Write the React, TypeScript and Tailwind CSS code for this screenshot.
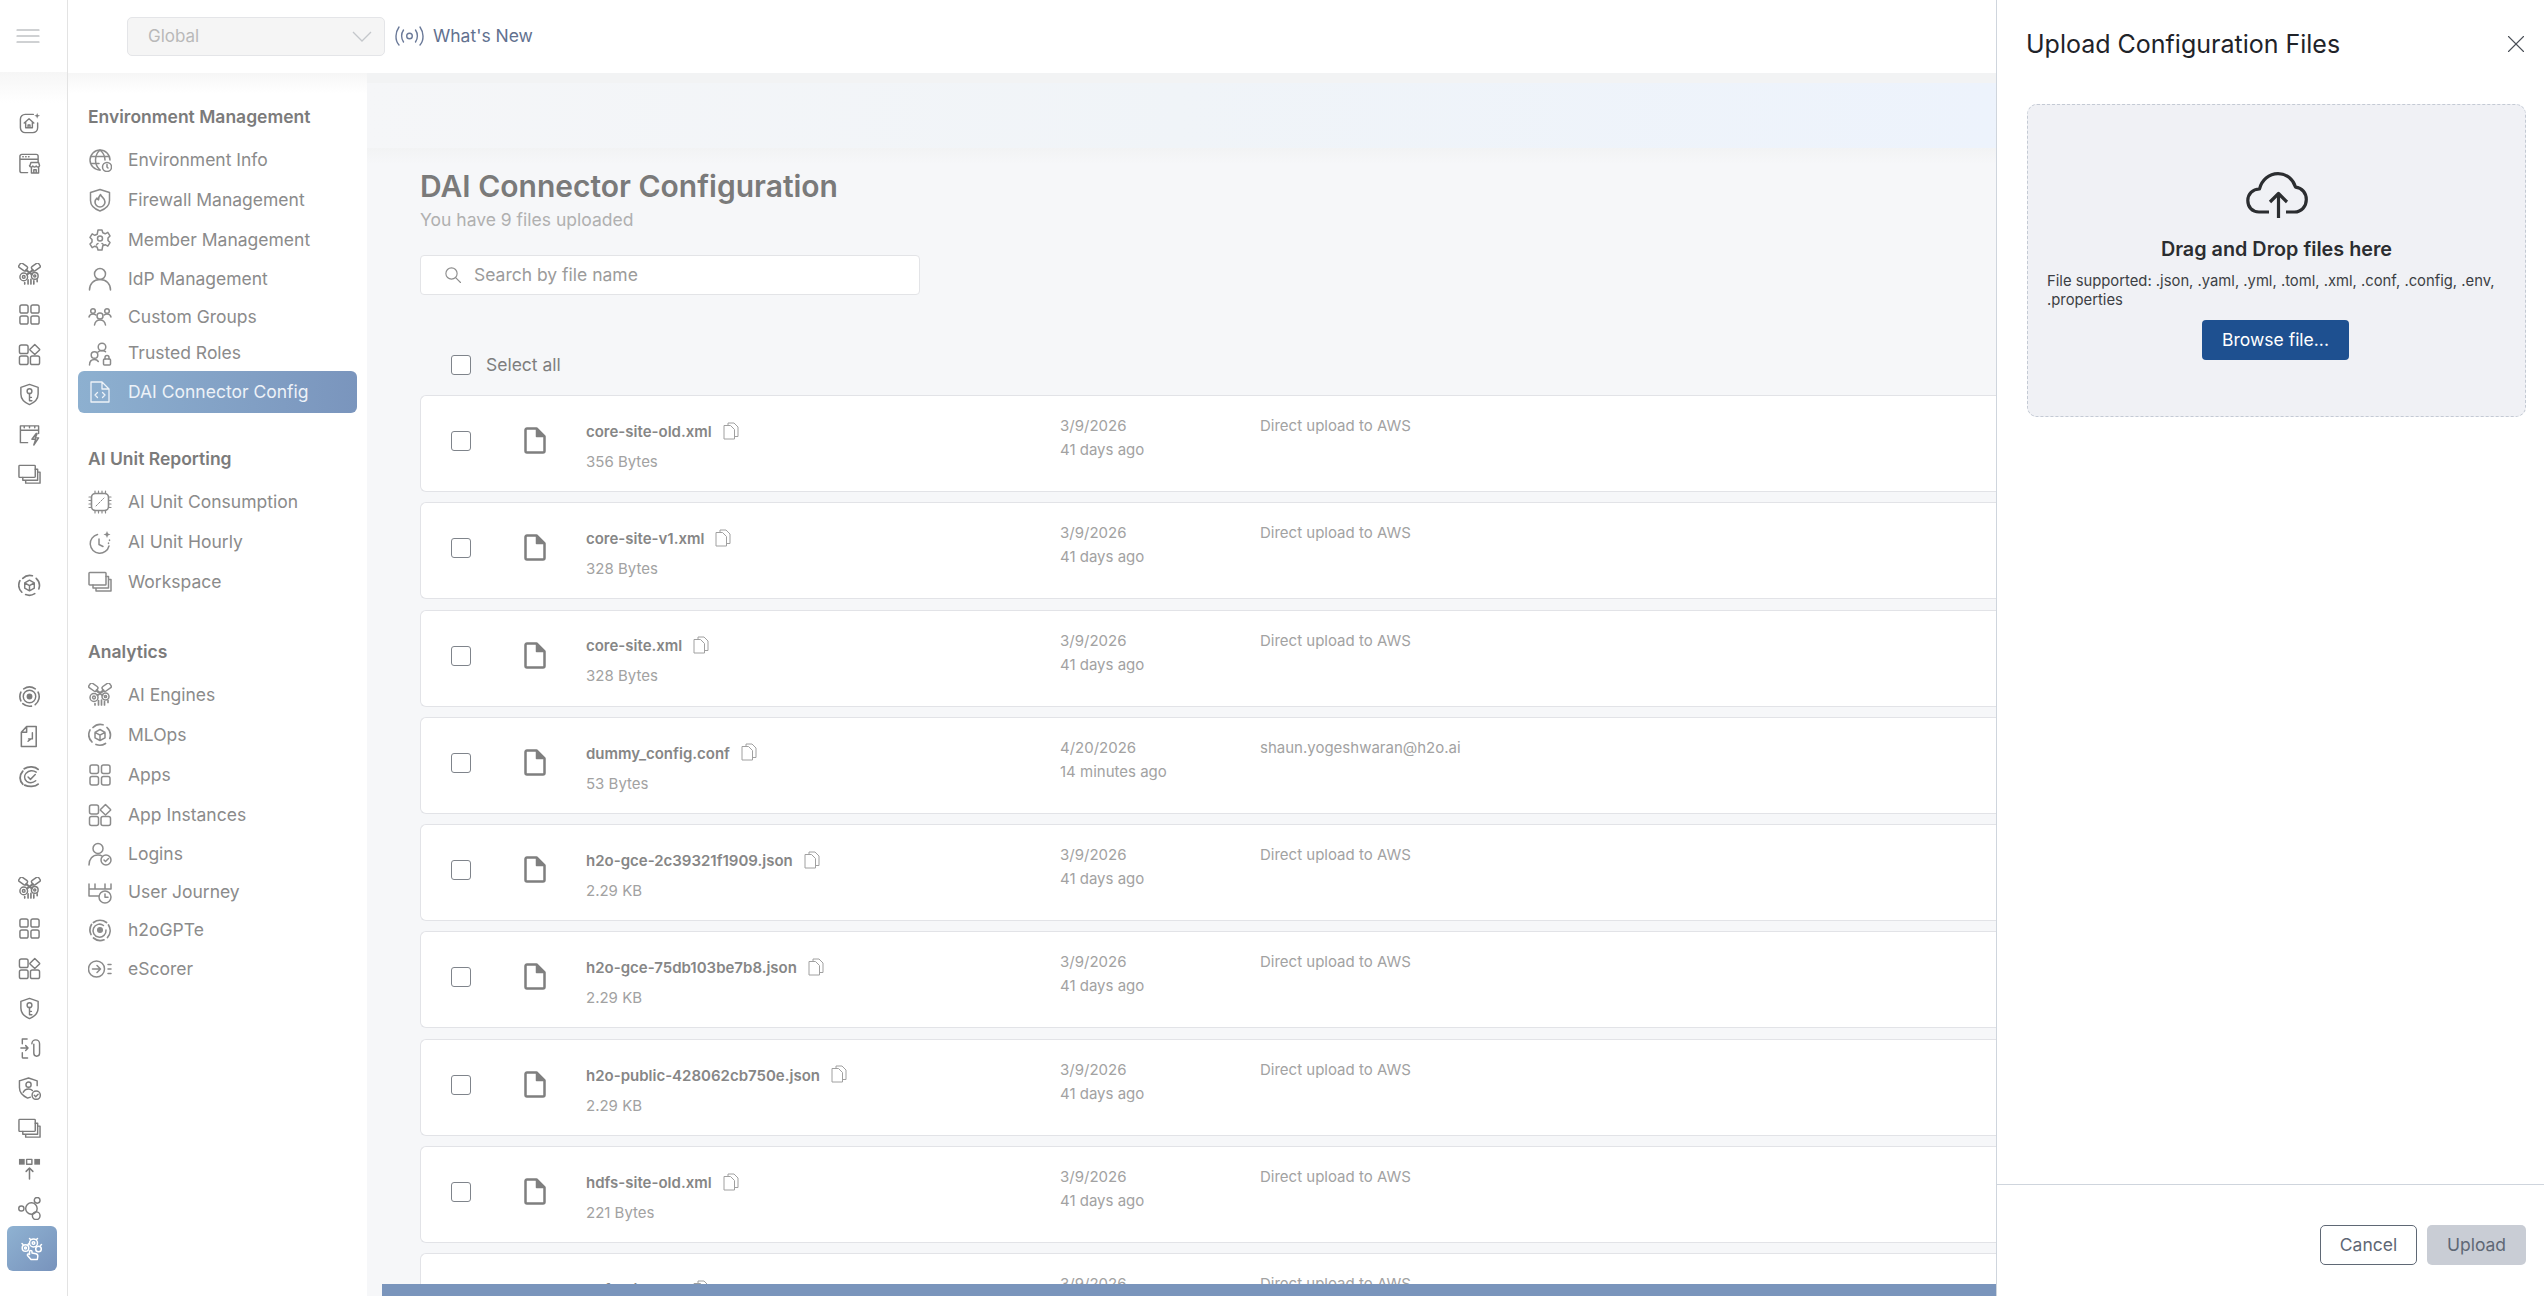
import { ReactNode } from "react";
import { X } from "lucide-react";

type IconProps = { className?: string };

// shared wrapper for the outline icons, they all sit on a 24 grid
function Svg({ className, children }: IconProps & { children: ReactNode }) {
  return (
    <svg
      viewBox="0 0 24 24"
      fill="none"
      stroke="currentColor"
      strokeWidth={1.5}
      strokeLinecap="round"
      strokeLinejoin="round"
      className={className}
    >
      {children}
    </svg>
  );
}

const HomeSpark = (p: IconProps) => (
  <Svg {...p}>
    <path d="M16 2.500H7.500a5 5 0 0 0-5 5v9a5 5 0 0 0 5 5h8a5 5 0 0 0 5-5v-5" />
    <path d="M6.500 11.500 11.500 7l5 4.500M8 10.500v6h7v-6M10.500 16.500v-3h2v3" />
    <path d="M20 1l.8 2.200L23 4l-2.200.8L20 7l-.8-2.200L17 4l2.200-.8z" fill="currentColor" stroke="none" />
  </Svg>
);
const BrowserStore = (p: IconProps) => (
  <Svg {...p}>
    <path d="M10 21.500H4a2 2 0 0 1-2-2v-15a2 2 0 0 1 2-2h15a2 2 0 0 1 2 2v6M2 7.500h19" />
    <path d="M5 5h.5M8 5h.5M11 5h.5" />
    <path d="M12.500 14l1-3h8l1 3c0 2-3 2-3.500.5-.5 1.500-3 1.500-3.500 0-.5 1.500-3.500 1.500-3.500-.5zM14 16v6h7.500v-6M16.500 22v-3.500H19V22" />
  </Svg>
);
const Engines = (p: IconProps) => (
  <Svg {...p}>
    <rect x="1" y="1.500" width="9" height="5.500" rx="1.800" transform="rotate(35 5.500 4)" />
    <rect x="14" y="1.500" width="9" height="5.500" rx="1.800" transform="rotate(-35 18.500 4)" />
    <path d="M8.500 7.500l6 4.500M15.500 7.500l-6 4.500" strokeWidth={2.200} />
    <circle cx="6" cy="14.500" r="4" />
    <circle cx="6" cy="14.500" r="1.400" />
    <circle cx="17.500" cy="13.500" r="3.500" />
    <circle cx="17.500" cy="13.500" r="1.100" />
    <path d="M7 20.500v1.500M10.500 17.500v4.500M13.500 17v5M16.500 18.500v3.500M20 17.500v2" strokeWidth={1.700} />
  </Svg>
);
const Grid = (p: IconProps) => (
  <Svg {...p}>
    <rect x="2" y="2" width="8.500" height="8.500" rx="2" />
    <rect x="13.500" y="2" width="8.500" height="8.500" rx="2" />
    <rect x="2" y="13.500" width="8.500" height="8.500" rx="2" />
    <rect x="13.500" y="13.500" width="8.500" height="8.500" rx="2" />
  </Svg>
);
const AppsDiamond = (p: IconProps) => (
  <Svg {...p}>
    <rect x="1.500" y="2" width="9" height="9" rx="2" />
    <path d="M17.500 1.500l5 5a.6.6 0 0 1 0 .8l-5 4.700-5-4.700a.6.6 0 0 1 0-.8z" />
    <rect x="1.500" y="13.500" width="9" height="9" rx="2" />
    <rect x="13" y="13.500" width="9.500" height="9" rx="2" />
  </Svg>
);
const ShieldKey = (p: IconProps) => (
  <Svg {...p}>
    <path d="M12 1.500 21 4.500v7c0 5.500-4 9-9 11-5-2-9-5.500-9-11v-7z" />
    <circle cx="12" cy="8.500" r="2.500" />
    <path d="M12 11v7.500h2.500M12 15h2" />
  </Svg>
);
const PanelBolt = (p: IconProps) => (
  <Svg {...p}>
    <path d="M10 20.500H2.500V3h19v8M2.500 7.500h19M6.500 3v2M12 3v2M17.500 3v2" />
    <path d="M19 11l-4.500 6h4l-2 6 5-7.500h-3.500l2-4.500z" />
  </Svg>
);
const Stacked = (p: IconProps) => (
  <Svg {...p}>
    <rect x="1" y="2.500" width="17" height="12.500" rx=".8" />
    <path d="M18 6.500h2.500V18H5v-3M20.500 9.500H23V21H8v-3" />
  </Svg>
);
const MLOps = (p: IconProps) => (
  <Svg {...p}>
    <path d="M5 4.500A10.500 10.500 0 0 1 15 1.800M19 4.500a10.500 10.500 0 0 1 2.800 11M17.500 20.500a10.500 10.500 0 0 1-9.500 1M4 19a10.500 10.500 0 0 1-2-12" strokeWidth={1.700} />
    <path d="M12 6.500 17 9.300v5.500l-5 2.700-5-2.700V9.300zM7 9.300l5 2.900 5-2.900M12 12.200v5.300" />
  </Svg>
);
const Target = (p: IconProps) => (
  <Svg {...p}>
    <path d="M6 4a10.500 10.500 0 0 1 12 0M21 7.500a10.500 10.500 0 0 1-3 13M14 22a10.500 10.500 0 0 1-9-2.500M3 16.500a10.500 10.500 0 0 1 0-9" strokeWidth={1.700} />
    <circle cx="12" cy="12" r="6.500" />
    <circle cx="12" cy="12" r="2.300" fill="currentColor" />
  </Svg>
);
const FileNote = (p: IconProps) => (
  <Svg {...p}>
    <path d="M9 1.500h10v21H3.500V7.500zM9 1.500v6H3.500" strokeWidth={1.600} />
    <path d="M15 8v6.500h-4M10.500 17l3-2.500" />
  </Svg>
);
const CircleCheck = (p: IconProps) => (
  <Svg {...p}>
    <path d="M21 4.500C18 1.500 11 .8 6.500 4M5 6.500c-4 4.500-3.500 10 0 13.500M7 21c4 2 11 2 14-1" strokeWidth={1.900} />
    <path d="M19 7.500a8 8 0 0 0-10.500 1c-2.500 3-2 6 .5 8.500 3 2 7 1.500 9.500-.5" />
    <path d="M10.500 12.500l2.500 2.500 5-5" />
  </Svg>
);
const LinkArrow = (p: IconProps) => (
  <Svg {...p}>
    <path d="M9.500 2h-5v5M3 11.500h7.500M8 9l2.500 2.500L8 14M4.500 16.500V21a1 1 0 0 0 1 1H10" />
    <path d="M14.500 7a4 4 0 0 1 8 0v10a3 3 0 0 1-6 0V7.500" />
  </Svg>
);
const ShieldUser = (p: IconProps) => (
  <Svg {...p}>
    <path d="M11 1 20 4v5M1.500 4 11 1M1.500 4v7c0 5.500 4 9 8.500 11l3-1" />
    <circle cx="11" cy="8" r="2.700" />
    <path d="M5.500 16c1-2.500 3-3.500 5.500-3.500 1.500 0 3 .5 4 1.500" />
    <circle cx="19" cy="19" r="4.300" />
    <path d="M17 19l1.500 1.500 2.500-2.500" />
  </Svg>
);
const SquaresUp = (p: IconProps) => (
  <Svg {...p}>
    <rect x="1" y="2" width="6" height="6" fill="currentColor" stroke="none" />
    <rect x="9" y="2.500" width="5.500" height="5" />
    <rect x="17" y="2" width="6" height="6" fill="currentColor" stroke="none" />
    <path d="M12 23V11.500M8.500 15l3.500-3.500 3.500 3.500" strokeWidth={1.600} />
  </Svg>
);
const Bubbles = (p: IconProps) => (
  <Svg {...p}>
    <circle cx="3.500" cy="12" r="2.700" />
    <circle cx="20" cy="3.500" r="3" />
    <circle cx="14" cy="12" r="6" />
    <circle cx="19" cy="19.500" r="4" />
  </Svg>
);
const GearHand = (p: IconProps) => (
  <Svg {...p}>
    <circle cx="13.500" cy="6" r="4" />
    <circle cx="13.500" cy="6" r="1.300" />
    <circle cx="5.500" cy="11" r="3.300" />
    <circle cx="5.500" cy="11" r="1" />
    <circle cx="18.500" cy="12" r="2.800" />
    <path d="M10.500 2.500l-1-1M16.500 2.500l1-1M3 7.500l-1-1M8 7.500l1-1M20.500 8.500l1-1" />
    <path d="M9.500 14.500c0-1.500 2.500-1.500 2.500 0V16l4 .8c1.500.4 2 1.200 1.800 2.700l-.5 3H11l-3.500-4c-.5-1.500 1-2 2-1z" />
  </Svg>
);
const GlobeClock = (p: IconProps) => (
  <Svg {...p}>
    <path d="M12 22A10 10 0 1 1 22 12M2.500 8.500h19M2.500 15.500H11" />
    <path d="M12 2c-6 5.500-6 14.500 0 20M12 2c3.500 3 5 7 5 10" />
    <circle cx="19" cy="19" r="4.500" fill="#fff" />
    <path d="M19 16.500V19l1 1" />
  </Svg>
);
const ShieldFlame = (p: IconProps) => (
  <Svg {...p}>
    <path d="M12 1.500 21.500 4.500v8c0 5-4 8.500-9.500 10.500-5.500-2-9.500-5.500-9.500-10.500v-8z" />
    <path d="M12.500 6.500c.5 2.500 4.500 3.500 4.500 7.500a5 5 0 0 1-10 0c0-2 1-3 2-4 .3 1 .8 1.500 1.500 1.800 0-2 .8-4 2-5.300z" strokeWidth={1.600} />
  </Svg>
);
const GearUser = (p: IconProps) => (
  <Svg {...p}>
    <path d="M10 2h4l.8 2.800 2.400 1 2.600-1.400 2.200 3.500-2 2.100v2.500l2 2.100-2.200 3.500-2.600-1.400-2.400 1L14 22h-4l-.8-2.800-2.400-1-2.600 1.400L2 16.100 4 14v-2.500L2 9.400l2.200-3.500 2.600 1.400 2.400-1z" />
    <circle cx="12" cy="10.500" r="2.500" />
    <path d="M8.500 17c.5-1 1-1.500 1.500-1.500M15.500 17c-.5-1-1-1.500-1.500-1.500" />
  </Svg>
);
const User = (p: IconProps) => (
  <Svg {...p}>
    <circle cx="12" cy="7" r="5.500" />
    <path d="M1.500 23c0-6 4-10.500 10.500-10.500S22.500 17 22.500 23" />
  </Svg>
);
const UsersThree = (p: IconProps) => (
  <Svg {...p}>
    <circle cx="5" cy="6" r="2.300" />
    <circle cx="19" cy="6" r="2.300" />
    <circle cx="12" cy="11" r="3" />
    <path d="M1 12c.5-2 2-3 4-3 1 0 2 .3 2.800 1M23 12c-.5-2-2-3-4-3-1 0-2 .3-2.800 1M6.500 20c.5-3 2.500-5 5.500-5s5 2 5.500 5" />
  </Svg>
);
const UsersLock = (p: IconProps) => (
  <Svg {...p}>
    <circle cx="14" cy="5" r="3.800" />
    <circle cx="6.500" cy="13" r="3.300" />
    <path d="M1.500 23c0-3.500 2-5.500 5-5.500 1.500 0 3 .7 3.800 2M10 10c1-1 2.500-1.500 4-1.500s2.500.5 3.500 1.200" />
    <rect x="15.500" y="17" width="7" height="6" rx="1" />
    <path d="M17 17v-1.500a2 2 0 0 1 4 0V17" />
  </Svg>
);
const FileCode = (p: IconProps) => (
  <Svg {...p}>
    <path d="M3 2h11l7 7v13H3zM14 2v7h7" strokeWidth={1.300} />
    <path d="M9.500 12.500 7 15l2.500 2.500M14.500 12.500 17 15l-2.500 2.500" strokeWidth={1.300} />
  </Svg>
);
const Chip = (p: IconProps) => (
  <Svg {...p}>
    <rect x="3.500" y="3.500" width="17" height="17" rx="4" strokeWidth={1.600} />
    <path d="M7 1v2M10.500 1v2M14 1v2M17.500 1v2M7 21v2M10.500 21v2M14 21v2M17.500 21v2M1 7h2M1 10.500h2M1 14h2M1 17.500h2M21 7h2M21 10.500h2M21 14h2M21 17.500h2" strokeWidth={1.200} />
    <path d="M8 16l8-8" strokeDasharray="2 1.500" strokeWidth={1} />
  </Svg>
);
const ClockSpark = (p: IconProps) => (
  <Svg {...p}>
    <path d="M9.500 4.500A9.500 9.500 0 1 0 21 16" />
    <path d="M11 9v5.500l4 2" />
    <path d="M19 1l1 2.500 2.500 1-2.500 1L19 8l-1-2.500-2.500-1 2.500-1z" fill="currentColor" stroke="none" />
    <path d="M21.500 10v.5M20.500 13v.5" />
  </Svg>
);
const UserCheck = (p: IconProps) => (
  <Svg {...p}>
    <circle cx="10" cy="6.500" r="5" />
    <path d="M1 23c0-6 3.500-10 9-10 1.500 0 3 .3 4 1" />
    <circle cx="18" cy="18" r="5" />
    <path d="M16 18l1.500 1.500 3-3" />
  </Svg>
);
const Journey = (p: IconProps) => (
  <Svg {...p}>
    <path d="M1 4v12h10M23 4v5M1 9h22M7 4v5M17 4v5" />
    <circle cx="17" cy="17" r="6" />
    <path d="M17 14v3.300h3" />
  </Svg>
);
const Rings = (p: IconProps) => (
  <Svg {...p}>
    <path d="M5.500 4.500a10.500 10.500 0 0 1 13 0M20.500 7a10.500 10.500 0 0 1-1 12.500M16 21.800A10.500 10.500 0 0 1 5.500 20M3 16.500a10.500 10.500 0 0 1 .5-10" strokeWidth={1.700} />
    <path d="M15.500 7.500a6.500 6.500 0 1 0 2.500 4.500" />
    <circle cx="12" cy="12" r="2.300" fill="currentColor" />
  </Svg>
);
const Scorer = (p: IconProps) => (
  <Svg {...p}>
    <circle cx="8.500" cy="12" r="8" />
    <path d="M4.500 12H12M9 8.500l3.500 3.500L9 15.500M20 7.500h3M20 12h3M20 16.500h3" />
  </Svg>
);
const Hamburger = (p: IconProps) => (
  <Svg {...p}>
    <path d="M1 6h22M1 12h22M1 18h22" strokeWidth={1.200} />
  </Svg>
);
const Broadcast = (p: IconProps) => (
  <svg viewBox="0 0 29 20" fill="none" stroke="currentColor" strokeWidth={1.400} strokeLinecap="round" className={p.className}>
    <circle cx="14.500" cy="10" r="2.800" />
    <path d="M8.500 4c-2.500 3.500-2.500 8.500 0 12M20.500 4c2.500 3.500 2.500 8.500 0 12M4 1C.5 6-.5 14 4 19M25 1c3.500 5 4.500 13 0 18" />
  </svg>
);
const DocFile = (p: IconProps) => (
  <svg viewBox="0 0 22 27" fill="none" stroke="currentColor" strokeWidth={2.500} strokeLinejoin="round" className={p.className}>
    <path d="M1.500 3A1.500 1.500 0 0 1 3 1.500h9.500l8 8V24a1.500 1.500 0 0 1-1.500 1.500H3A1.500 1.500 0 0 1 1.500 24z" />
    <path d="M12.500 1.500v8h8" fill="currentColor" strokeWidth={1.500} />
  </svg>
);
const CopyDoc = (p: IconProps) => (
  <svg viewBox="0 0 16 18" fill="none" stroke="currentColor" strokeWidth={1} strokeLinejoin="round" className={p.className}>
    <path d="M5 3.500V1h6l4 4v9.500h-3.500" />
    <path d="M1 3.500h6.500l4 4V17H1z" />
  </svg>
);
const Search = (p: IconProps) => (
  <Svg {...p}>
    <circle cx="10" cy="10" r="7.500" />
    <path d="M15.500 15.500 22 22" />
  </Svg>
);
const CloudUp = (p: IconProps) => (
  <svg viewBox="0 0 62 46" fill="none" stroke="currentColor" strokeWidth={3.200} strokeLinejoin="round" className={p.className}>
    <path d="M23 40H13C6 40 1.800 35 1.800 28.500 1.800 22 6.500 17 13.500 17c2-9 9.500-15.400 18.500-15.400 8.500 0 15 5.500 17.500 13.500 6.500.7 10.800 6 10.800 12.400C60.300 34.500 55.500 40 48.500 40H40" />
    <path d="M32.500 46V22M24 30l8.500-8.500L41 30" />
  </svg>
);

type NavItem = { label: string; icon: (p: IconProps) => ReactNode; h: string; active?: boolean };

const envItems: NavItem[] = [
  { label: "Environment Info", icon: GlobeClock, h: "h-[40px]" },
  { label: "Firewall Management", icon: ShieldFlame, h: "h-[40px]" },
  { label: "Member Management", icon: GearUser, h: "h-[40px]" },
  { label: "IdP Management", icon: User, h: "h-[38px]" },
  { label: "Custom Groups", icon: UsersThree, h: "h-[38px]" },
  { label: "Trusted Roles", icon: UsersLock, h: "h-[35px]" },
  { label: "DAI Connector Config", icon: FileCode, h: "h-[42px]", active: true },
];
const reportingItems: NavItem[] = [
  { label: "AI Unit Consumption", icon: Chip, h: "h-[40px]" },
  { label: "AI Unit Hourly", icon: ClockSpark, h: "h-[40px]" },
  { label: "Workspace", icon: Stacked, h: "h-[40px]" },
];
const analyticsItems: NavItem[] = [
  { label: "AI Engines", icon: Engines, h: "h-[40px]" },
  { label: "MLOps", icon: MLOps, h: "h-[40px]" },
  { label: "Apps", icon: Grid, h: "h-[40px]" },
  { label: "App Instances", icon: AppsDiamond, h: "h-[40px]" },
  { label: "Logins", icon: UserCheck, h: "h-[38px]" },
  { label: "User Journey", icon: Journey, h: "h-[38px]" },
  { label: "h2oGPTe", icon: Rings, h: "h-[38px]" },
  { label: "eScorer", icon: Scorer, h: "h-[40px]" },
];

type FileRow = { name: string; size: string; date: string; ago: string; source: string };

const aws = "Direct upload to AWS";
const files: FileRow[] = [
  { name: "core-site-old.xml", size: "356 Bytes", date: "3/9/2026", ago: "41 days ago", source: aws },
  { name: "core-site-v1.xml", size: "328 Bytes", date: "3/9/2026", ago: "41 days ago", source: aws },
  { name: "core-site.xml", size: "328 Bytes", date: "3/9/2026", ago: "41 days ago", source: aws },
  { name: "dummy_config.conf", size: "53 Bytes", date: "4/20/2026", ago: "14 minutes ago", source: "shaun.yogeshwaran@h2o.ai" },
  { name: "h2o-gce-2c39321f1909.json", size: "2.29 KB", date: "3/9/2026", ago: "41 days ago", source: aws },
  { name: "h2o-gce-75db103be7b8.json", size: "2.29 KB", date: "3/9/2026", ago: "41 days ago", source: aws },
  { name: "h2o-public-428062cb750e.json", size: "2.29 KB", date: "3/9/2026", ago: "41 days ago", source: aws },
  { name: "hdfs-site-old.xml", size: "221 Bytes", date: "3/9/2026", ago: "41 days ago", source: aws },
  // only the top of this row shows above the bottom bar
  { name: "hdfs-site.xml", size: "", date: "3/9/2026", ago: "", source: aws },
];

function RailIcon({ icon: Icon, active }: { icon: (p: IconProps) => ReactNode; active?: boolean }) {
  if (active) {
    return (
      <div className="h-[45px] w-[50px] ml-[7px] -mt-[2px] flex items-center justify-center rounded-md bg-gradient-to-br from-[#8fb2d2] to-[#7893bc] text-white">
        <Icon className="w-[24px] h-[24px]" />
      </div>
    );
  }
  return (
    <div className="h-10 w-full shrink-0 flex items-center justify-center pr-[8px] text-[#7c7c7c]">
      <Icon className="w-[23px] h-[23px]" />
    </div>
  );
}

function NavSection({ title, items, className }: { title: string; items: NavItem[]; className: string }) {
  return (
    <div className={className}>
      <div className="h-[46px] flex items-center pl-[10px] text-[17.5px] font-semibold text-[#7b7b7b]">{title}</div>
      {items.map((item) => {
        const Icon = item.icon;
        return (
          <div
            key={item.label}
            className={`${item.h} flex items-center gap-[16px] pl-[10px] rounded-md ${
              item.active
                ? "bg-gradient-to-r from-[#8db0d0] to-[#7a95bd] text-[#edf2f8]"
                : "text-[#8b8b8b]"
            }`}
          >
            <Icon className="w-[24px] h-[24px] shrink-0" />
            <span className="text-[17.5px]">{item.label}</span>
          </div>
        );
      })}
    </div>
  );
}

function Checkbox() {
  return <div className="w-[20px] h-[20px] shrink-0 rounded-[3px] border border-[#7f848b] bg-white" />;
}

export default function App() {
  return (
    <div className="flex h-[1296px] w-[2544px] overflow-hidden bg-white font-['Inter',sans-serif]">
      {/* icon rail */}
      <div className="w-[68px] shrink-0 flex flex-col border-r border-[#e3e3e3]">
        <div className="h-[72px] shrink-0 flex items-center justify-center pr-[11px] text-[#a0a3a8]">
          <Hamburger className="w-[24px] h-[24px]" />
        </div>
        <div className="h-[31px] shrink-0 bg-gradient-to-b from-[#f6f6f6] to-white" />
        <RailIcon icon={HomeSpark} />
        <RailIcon icon={BrowserStore} />
        <div className="h-[71px] shrink-0" />
        <RailIcon icon={Engines} />
        <RailIcon icon={Grid} />
        <RailIcon icon={AppsDiamond} />
        <RailIcon icon={ShieldKey} />
        <RailIcon icon={PanelBolt} />
        <RailIcon icon={Stacked} />
        <div className="h-[71px] shrink-0" />
        <RailIcon icon={MLOps} />
        <div className="h-[71px] shrink-0" />
        <RailIcon icon={Target} />
        <RailIcon icon={FileNote} />
        <RailIcon icon={CircleCheck} />
        <div className="h-[72px] shrink-0" />
        <RailIcon icon={Engines} />
        <RailIcon icon={Grid} />
        <RailIcon icon={AppsDiamond} />
        <RailIcon icon={ShieldKey} />
        <RailIcon icon={LinkArrow} />
        <RailIcon icon={ShieldUser} />
        <RailIcon icon={Stacked} />
        <RailIcon icon={SquaresUp} />
        <RailIcon icon={Bubbles} />
        <RailIcon icon={GearHand} active />
      </div>

      <div className="flex-1 min-w-0 flex flex-col">
        {/* top bar */}
        <div className="h-[73px] shrink-0 flex items-center pl-[59px] pb-[1px]">
          <div className="w-[258px] h-[39px] flex items-center justify-between pl-[20px] pr-[12px] pt-[1px] rounded-[5px] border border-[#e4e5e8] bg-[#f5f5f5] text-[17px] text-[#b9b9b9]">
            <span>Global</span>
            <svg viewBox="0 0 20 11" className="w-[20px] h-[11px]" fill="none" stroke="#c4c7cb" strokeWidth={1.3}>
              <path d="M1 1l9 9 9-9" />
            </svg>
          </div>
          <Broadcast className="w-[29px] h-[20px] ml-[10px] text-[#6b7a99]" />
          <span className="ml-[9px] pt-[1px] text-[17.5px] text-[#62718f]">What's New</span>
        </div>

        <div className="flex-1 min-h-0 flex">
          {/* sidebar */}
          <div className="w-[299px] shrink-0 flex flex-col px-[10px]">
            <div className="h-[20px] shrink-0 -mx-[10px] bg-gradient-to-b from-[#f6f6f6] to-white" />
            <NavSection title="Environment Management" items={envItems} className="mt-[1px]" />
            <NavSection title="AI Unit Reporting" items={reportingItems} className="mt-[23px]" />
            <NavSection title="Analytics" items={analyticsItems} className="mt-[27px]" />
          </div>

          {/* main content */}
          <div className="relative flex-1 min-w-0 overflow-hidden bg-[#f6f7f9]">
            <div className="h-[10px] bg-[#f2f3f4]" />
            <div className="h-[65px] bg-gradient-to-r from-[#f5f6f8] via-[#f0f4f8] to-[#edf3fc]" />
            <div className="h-[16px] bg-gradient-to-b from-[#f2f3f4] to-[#f6f7f9]" />
            <div className="pl-[53px]">
              <h1 className="text-[30px] leading-[44px] font-semibold text-[#7a7a7a]">DAI Connector Configuration</h1>
              <p className="text-[17.5px] leading-[24px] text-[#b0b0b0]">You have 9 files uploaded</p>
              <div className="mt-[23px] w-[500px] h-[40px] flex items-center pl-[23px] gap-[12px] rounded-[4px] border border-[#e3e4e7] bg-white text-[17.5px] text-[#9b9b9b]">
                <Search className="w-[18px] h-[18px] text-[#8d8d8d]" />
                <span>Search by file name</span>
              </div>
              <div className="mt-[60px] h-[20px] flex items-center pl-[31px] gap-[15px] text-[17.5px] text-[#7e7e7e]">
                <Checkbox />
                <span>Select all</span>
              </div>
              <div className="mt-[20px] flex flex-col gap-[10.3px]">
                {files.map((file) => (
                  <div key={file.name} className="h-[97px] shrink-0 flex items-start rounded-l-[6px] border border-r-0 border-[#e2e3e7] bg-white pl-[30px]">
                    <div className="mt-[35px]">
                      <Checkbox />
                    </div>
                    <DocFile className="mt-[31px] ml-[53px] w-[22px] h-[27px] shrink-0 text-[#7f7f7f]" />
                    <div className="ml-[40px] w-[474px] shrink-0">
                      <div className="mt-[26px] h-[20px] flex items-center gap-[11px]">
                        <span className="text-[15px] font-semibold text-[#868686]">{file.name}</span>
                        <CopyDoc className="w-[16px] h-[18px] text-[#a0a0a0] -mt-[3px]" />
                      </div>
                      <div className="mt-[10px] h-[20px] flex items-center text-[15px] text-[#a2a2a2]">{file.size}</div>
                    </div>
                    <div className="w-[200px] shrink-0 mt-[18px] text-[15px] leading-[24px] text-[#a2a2a2]">
                      <div>{file.date}</div>
                      <div>{file.ago}</div>
                    </div>
                    <div className="mt-[18px] text-[15px] leading-[24px] text-[#a2a2a2]">{file.source}</div>
                  </div>
                ))}
              </div>
            </div>
            {/* bottom bar overlaps the list */}
            <div className="absolute bottom-0 left-[15px] right-0 h-[12px] bg-[#7a95bc]" />
          </div>
        </div>
      </div>

      {/* upload drawer */}
      <div className="w-[548px] shrink-0 flex flex-col border-l border-[#cfd5dd] bg-white">
        <div className="h-[104px] shrink-0 flex items-start justify-between pl-[29px] pr-[13px]">
          <h2 className="mt-[26px] text-[25px] leading-[36px] text-[#1f2329]">Upload Configuration Files</h2>
          <X strokeWidth={0.9} className="mt-[29px] w-[30px] h-[30px] text-[#4a4f57]" />
        </div>
        <div className="ml-[30px] mr-[18px] h-[313px] shrink-0 flex flex-col items-center rounded-[10px] border border-dashed border-[#c4cad4] bg-[#f0f1f5] px-[19px]">
          <CloudUp className="mt-[67px] w-[62px] h-[46px] text-[#2b2d30]" />
          <div className="mt-[17px] text-[19.8px] leading-[28px] font-semibold text-[#2b2d30]">Drag and Drop files here</div>
          <div className="mt-[9px] w-full text-[14.8px] leading-[19px] text-[#3c3f44]">
            File supported: .json, .yaml, .yml, .toml, .xml, .conf, .config, .env, .properties
          </div>
          <button className="mt-[10px] mr-[2px] w-[147px] h-[40px] rounded-[4px] bg-[#1e5090] text-[17.5px] text-white">Browse file...</button>
        </div>
        <div className="flex-1" />
        <div className="h-[112px] shrink-0 flex items-start justify-end gap-[10px] border-t border-[#cfd5dd] pt-[40px] pr-[18px]">
          <button className="w-[97px] h-[40px] rounded-[5px] border border-[#5f6875] bg-white text-[17.5px] text-[#5f6875]">Cancel</button>
          <button className="w-[99px] h-[40px] rounded-[5px] bg-[#c9cdd5] text-[17.5px] text-[#5f6875]">Upload</button>
        </div>
      </div>
    </div>
  );
}
